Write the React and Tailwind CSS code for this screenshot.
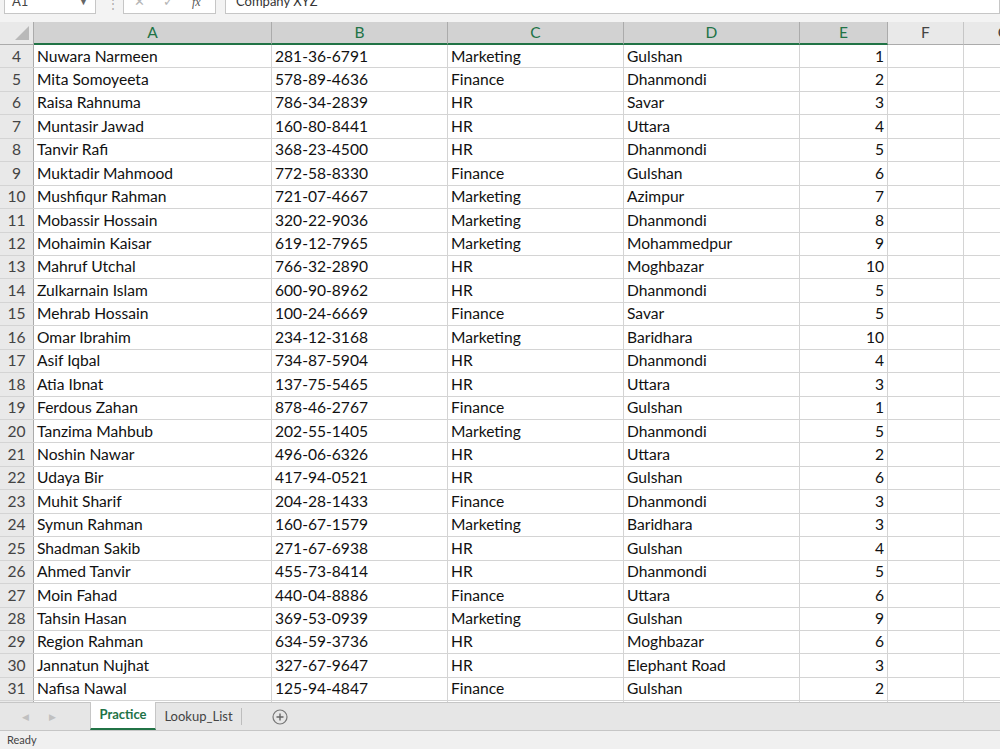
import React from 'react';

const rows = [
  [4, 'Nuwara Narmeen', '281-36-6791', 'Marketing', 'Gulshan', 1],
  [5, 'Mita Somoyeeta', '578-89-4636', 'Finance', 'Dhanmondi', 2],
  [6, 'Raisa Rahnuma', '786-34-2839', 'HR', 'Savar', 3],
  [7, 'Muntasir Jawad', '160-80-8441', 'HR', 'Uttara', 4],
  [8, 'Tanvir Rafi', '368-23-4500', 'HR', 'Dhanmondi', 5],
  [9, 'Muktadir Mahmood', '772-58-8330', 'Finance', 'Gulshan', 6],
  [10, 'Mushfiqur Rahman', '721-07-4667', 'Marketing', 'Azimpur', 7],
  [11, 'Mobassir Hossain', '320-22-9036', 'Marketing', 'Dhanmondi', 8],
  [12, 'Mohaimin Kaisar', '619-12-7965', 'Marketing', 'Mohammedpur', 9],
  [13, 'Mahruf Utchal', '766-32-2890', 'HR', 'Moghbazar', 10],
  [14, 'Zulkarnain Islam', '600-90-8962', 'HR', 'Dhanmondi', 5],
  [15, 'Mehrab Hossain', '100-24-6669', 'Finance', 'Savar', 5],
  [16, 'Omar Ibrahim', '234-12-3168', 'Marketing', 'Baridhara', 10],
  [17, 'Asif Iqbal', '734-87-5904', 'HR', 'Dhanmondi', 4],
  [18, 'Atia Ibnat', '137-75-5465', 'HR', 'Uttara', 3],
  [19, 'Ferdous Zahan', '878-46-2767', 'Finance', 'Gulshan', 1],
  [20, 'Tanzima Mahbub', '202-55-1405', 'Marketing', 'Dhanmondi', 5],
  [21, 'Noshin Nawar', '496-06-6326', 'HR', 'Uttara', 2],
  [22, 'Udaya Bir', '417-94-0521', 'HR', 'Gulshan', 6],
  [23, 'Muhit Sharif', '204-28-1433', 'Finance', 'Dhanmondi', 3],
  [24, 'Symun Rahman', '160-67-1579', 'Marketing', 'Baridhara', 3],
  [25, 'Shadman Sakib', '271-67-6938', 'HR', 'Gulshan', 4],
  [26, 'Ahmed Tanvir', '455-73-8414', 'HR', 'Dhanmondi', 5],
  [27, 'Moin Fahad', '440-04-8886', 'Finance', 'Uttara', 6],
  [28, 'Tahsin Hasan', '369-53-0939', 'Marketing', 'Gulshan', 9],
  [29, 'Region Rahman', '634-59-3736', 'HR', 'Moghbazar', 6],
  [30, 'Jannatun Nujhat', '327-67-9647', 'HR', 'Elephant Road', 3],
  [31, 'Nafisa Nawal', '125-94-4847', 'Finance', 'Gulshan', 2],
];

const font = { fontFamily: 'Lato, "Open Sans", sans-serif' };

const Cell = ({ w, children, right }) => (
  <div
    className={`shrink-0 h-full border-r border-[#d4d4d4] px-[3px] flex items-center overflow-hidden whitespace-nowrap ${
      right ? 'justify-end' : ''
    } ${w}`}
  >
    {children}
  </div>
);

const Header = ({ w, label, sel }) => (
  <div
    className={`shrink-0 h-full flex items-center justify-center border-r text-[15.5px] ${w} ${
      sel
        ? 'bg-[#d2d2d2] text-[#217346] border-[#ababab] border-b-2 border-b-[#217346]'
        : 'bg-[#e9e9e9] text-[#444] border-[#c6c6c6] border-b border-b-[#ababab]'
    }`}
  >
    {label}
  </div>
);

export default function App() {
  return (
    <div className="w-[1000px] h-[749px] bg-white overflow-hidden flex flex-col text-[#111]" style={font}>
      {/* formula bar, cut off at the top */}
      <div className="h-[22px] shrink-0 bg-[#f3f3f3] relative">
        <div className="absolute left-[4px] top-[-10px] w-[92px] h-[24px] bg-white border border-[#c6c6c6] flex items-center px-[7px] text-[13px] text-[#444]">
          <span>A1</span>
          <span className="ml-auto text-[9px] text-[#666]">▼</span>
        </div>
        <div className="absolute left-[107px] top-[-2px] text-[#aaa] text-[12px] leading-[12px]">⋮</div>
        <div className="absolute left-[123px] top-[-10px] w-[93px] h-[24px] bg-white border border-[#c6c6c6] flex items-center px-[10px] gap-[18px] text-[#b5b5b5] text-[13px]">
          <span>✕</span>
          <span>✓</span>
          <span className="italic text-[#555] text-[12px]" style={{ fontFamily: '"Liberation Serif", serif' }}>fx</span>
        </div>
        <div className="absolute left-[225px] right-0 top-[-10px] h-[24px] bg-white border border-[#c6c6c6] flex items-center px-[10px] text-[13px] text-[#333]">
          Company XYZ
        </div>
      </div>

      {/* column headers */}
      <div className="h-[23px] shrink-0 flex">
        <div className="w-[34px] shrink-0 h-full bg-[#e9e9e9] border-r border-b border-[#ababab] relative">
          <svg className="absolute right-[4px] bottom-[4px]" width="14" height="14" viewBox="0 0 14 14">
            <path d="M14 0 L14 14 L0 14 Z" fill="#b9b9b9" />
          </svg>
        </div>
        <Header w="w-[238px]" label="A" sel />
        <Header w="w-[176px]" label="B" sel />
        <Header w="w-[176px]" label="C" sel />
        <Header w="w-[176px]" label="D" sel />
        <Header w="w-[88px]" label="E" sel />
        <Header w="w-[76px]" label="F" />
        <Header w="w-[80px]" label="G" />
      </div>

      {/* grid */}
      <div className="flex-1 overflow-hidden">
        {rows.map(([n, a, b, c, d, e]) => (
          <div key={n} className="h-[23.45px] flex border-b border-[#d4d4d4] text-[15.6px]">
            <div className="w-[34px] shrink-0 h-full bg-[#e9e9e9] border-r border-[#ababab] flex items-center justify-center text-[#444]">
              {n}
            </div>
            <Cell w="w-[238px]">{a}</Cell>
            <Cell w="w-[176px]">{b}</Cell>
            <Cell w="w-[176px]">{c}</Cell>
            <Cell w="w-[176px]">{d}</Cell>
            <Cell w="w-[88px]" right>{e}</Cell>
            <Cell w="w-[76px]" />
            <Cell w="w-[80px]" />
          </div>
        ))}
        <div className="h-[23px] flex">
          <div className="w-[34px] shrink-0 h-full bg-[#e9e9e9] border-r border-[#ababab]" />
          <Cell w="w-[238px]" />
          <Cell w="w-[176px]" />
          <Cell w="w-[176px]" />
          <Cell w="w-[176px]" />
          <Cell w="w-[88px]" />
          <Cell w="w-[76px]" />
        </div>
      </div>

      {/* sheet tabs */}
      <div className="h-[28px] shrink-0 bg-[#e6e6e6] border-t border-[#c6c6c6] flex items-stretch text-[13px]">
        <div className="w-[90px] flex items-center gap-[20px] pl-[22px] text-[#c0c0c0] text-[9px]">
          <span>◀</span>
          <span>▶</span>
        </div>
        <div className="w-[66px] bg-white border-b-2 border-[#217346] flex items-center justify-center font-bold text-[#217346] -mt-px border-x border-x-[#c6c6c6]">
          Practice
        </div>
        <div className="w-[86px] flex items-center justify-center text-[#444] border-r border-[#bdbdbd] my-[5px]">
          Lookup_List
        </div>
        <div className="ml-[30px] flex items-center">
          <svg width="16" height="16" viewBox="0 0 16 16">
            <circle cx="8" cy="8" r="7" fill="none" stroke="#777" strokeWidth="1.2" />
            <path d="M8 4.5 V11.5 M4.5 8 H11.5" stroke="#666" strokeWidth="1.4" />
          </svg>
        </div>
      </div>

      {/* status bar */}
      <div className="h-[19px] shrink-0 bg-[#f0f0f0] border-t border-[#c6c6c6] flex items-center px-[7px] text-[11px] text-[#444]">
        Ready
      </div>
    </div>
  );
}
